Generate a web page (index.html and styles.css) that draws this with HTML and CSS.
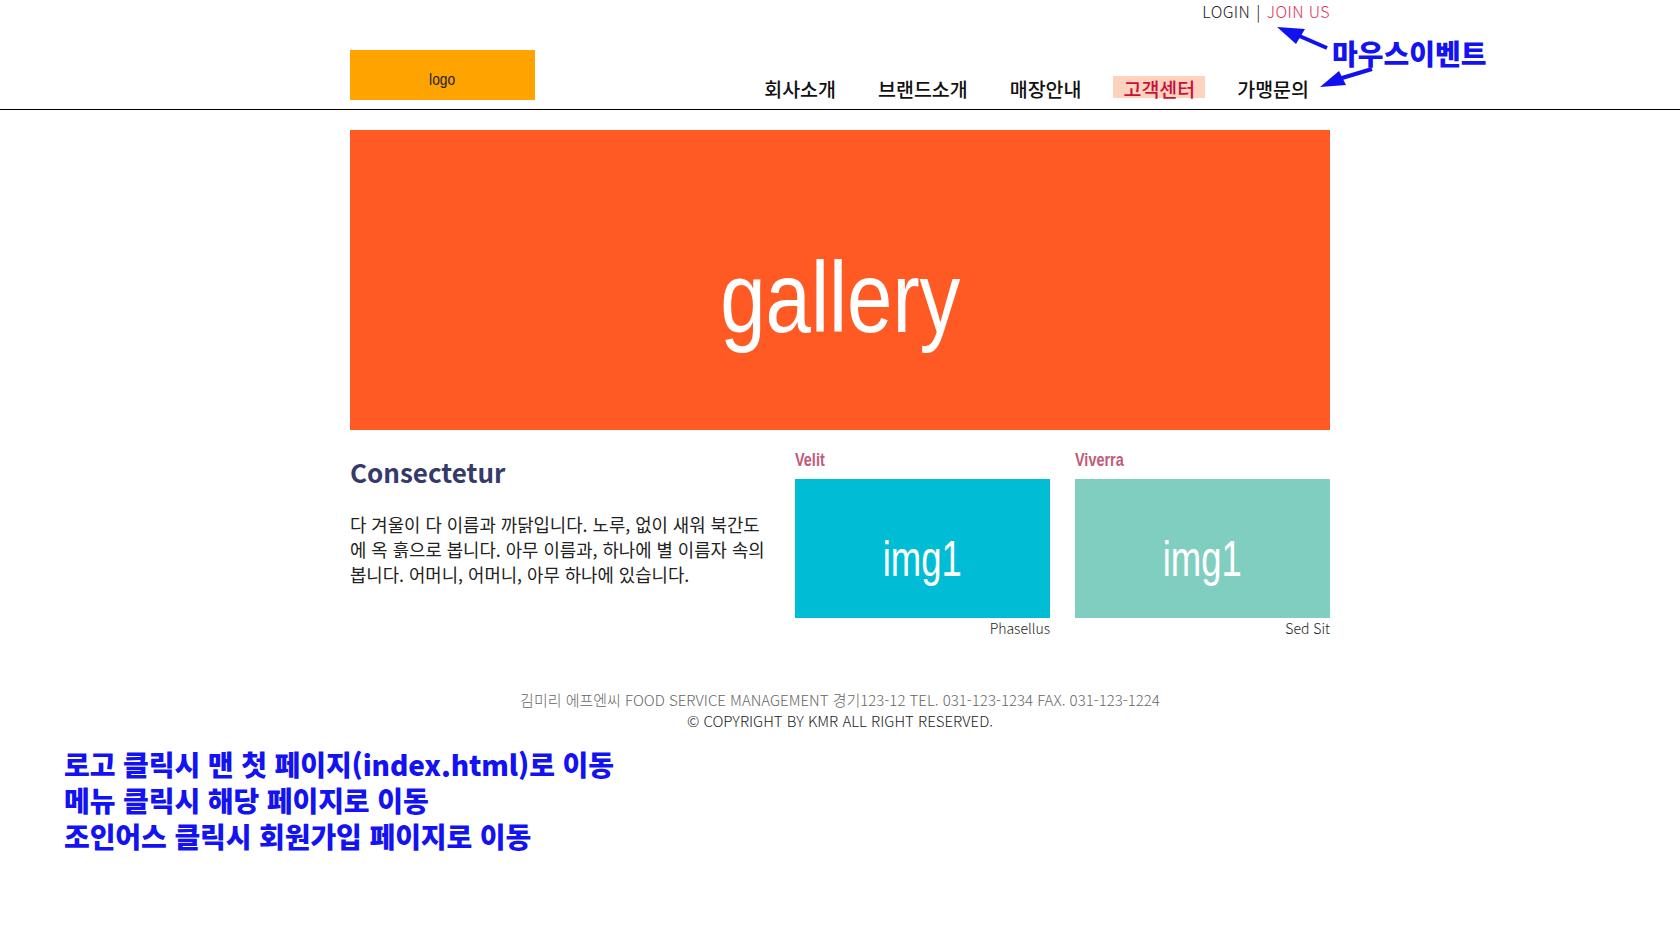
FILE: index.html
```html
<!DOCTYPE html>
<html lang="ko">
<head>
<meta charset="utf-8">
<title>gallery</title>
<link rel="stylesheet" href="styles.css">
</head>
<body>
<div class="util">
  <div class="container util-inner">
    <a class="util-login" href="#">LOGIN</a>
    <span class="util-sep">|</span>
    <a class="util-join" href="#">JOIN US</a>
  </div>
</div>
<header class="header">
  <div class="container header-inner">
    <a class="logo" href="index.html"><span class="narrow logo-text">logo</span></a>
    <nav class="gnb">
      <a class="gnb-item" href="#">회사소개</a>
      <a class="gnb-item" href="#">브랜드소개</a>
      <a class="gnb-item" href="#">매장안내</a>
      <a class="gnb-item gnb-item-on" href="#">고객센터</a>
      <a class="gnb-item" href="#">가맹문의</a>
    </nav>
  </div>
</header>
<main class="container">
  <section class="gallery"><span class="narrow gallery-text">gallery</span></section>
  <section class="content">
    <div class="intro">
      <h2 class="intro-title">Consectetur</h2>
      <p class="intro-text">다 겨울이 다 이름과 까닭입니다. 노루, 없이 새워 북간도에 옥 흙으로 봅니다. 아무 이름과, 하나에 별 이름자 속의 봅니다. 어머니, 어머니, 아무 하나에 있습니다.</p>
    </div>
    <figure class="card">
      <h3 class="card-title"><span class="narrow card-title-text">Velit</span></h3>
      <div class="card-img card-img-blue"><span class="narrow card-img-text">img1</span></div>
      <figcaption class="card-cap">Phasellus</figcaption>
    </figure>
    <figure class="card">
      <h3 class="card-title"><span class="narrow card-title-text">Viverra</span></h3>
      <div class="card-img card-img-mint"><span class="narrow card-img-text">img1</span></div>
      <figcaption class="card-cap">Sed Sit</figcaption>
    </figure>
  </section>
</main>
<footer class="footer">
  <p class="footer-addr">김미리 에프엔씨 FOOD SERVICE MANAGEMENT 경기123-12 TEL. 031-123-1234 FAX. 031-123-1224</p>
  <p class="footer-copy">© COPYRIGHT BY KMR ALL RIGHT RESERVED.</p>
</footer>
<div class="notes">
  <p>로고 클릭시 맨 첫 페이지(index.html)로 이동</p>
  <p>메뉴 클릭시 해당 페이지로 이동</p>
  <p>조인어스 클릭시 회원가입 페이지로 이동</p>
</div>
<div class="memo">
  <svg class="memo-arrows" width="120" height="70" viewBox="0 0 120 70">
    <line x1="53" y1="22" x2="14" y2="5" stroke="#1010f0" stroke-width="4"/>
    <polygon points="3,1 31,3 22,18" fill="#1010f0"/>
    <line x1="98" y1="43" x2="58" y2="55" stroke="#1010f0" stroke-width="4"/>
    <polygon points="46,61 65,45 72,59" fill="#1010f0"/>
  </svg>
  <span class="memo-text">마우스이벤트</span>
</div>
</body>
</html>
```
FILE: styles.css
```css
* { box-sizing: border-box; }
html, body { margin: 0; padding: 0; }
body {
  font-family: "Noto Sans", "Noto Sans CJK KR", sans-serif;
  color: #222;
  background: #fff;
  position: relative;
}
a { text-decoration: none; color: inherit; }
p, h2, h3, figure { margin: 0; }

.container { width: 980px; margin: 0 auto; }

/* condensed sans (Arial Narrow look) */
.narrow {
  display: inline-block;
  font-family: "Liberation Sans", Arial, sans-serif;
  transform-origin: center center;
}

/* util */
.util { height: 22px; }
.util-inner {
  display: flex;
  justify-content: flex-end;
  align-items: center;
  height: 22px;
  font-family: "Noto Sans CJK KR", sans-serif;
  font-weight: 300;
  font-size: 16px;
  letter-spacing: 0.4px;
}
.util-login { color: #222; }
.util-sep { color: #000; margin: 0 6px; }
.util-join { color: #e0305a; }

/* header */
.header { border-bottom: 1px solid #000; }
.header-inner {
  display: flex;
  justify-content: space-between;
  align-items: flex-end;
  height: 87px;
}
.logo {
  align-self: flex-start;
  margin-top: 28px;
  width: 185px;
  height: 50px;
  padding-top: 8px;
  background: #ffa300;
  color: #223;
  text-align: center;
  font-size: 16px;
  line-height: 42px;
}
.logo-text { transform: scaleX(0.86); }
.gnb {
  display: flex;
  gap: 22px;
  padding-right: 11px;
  padding-bottom: 11px;
}
.gnb-item {
  display: block;
  padding: 2px 10px 0;
  height: 22px;
  line-height: 22px;
  font-family: "Noto Sans CJK KR", sans-serif;
  font-weight: 500;
  font-size: 19.5px;
  color: #111;
}
.gnb-item-on { background: #fdd3bf; color: #c8103c; }

/* gallery */
.gallery {
  margin-top: 20px;
  height: 300px;
  padding-top: 28px;
  background: #ff5a23;
  color: #fff;
  text-align: center;
  font-size: 100px;
  line-height: 270px;
}
.gallery-text { transform: scaleX(0.815); }

/* content */
.content {
  display: flex;
  gap: 25px;
  padding-top: 20px;
}
.intro { width: 420px; padding-top: 6px; }
.intro-title {
  font-family: "Noto Sans CJK KR", sans-serif;
  font-weight: 700;
  font-size: 26px;
  line-height: 31px;
  color: #353a6a;
}
.intro-text {
  margin-top: 25px;
  font-family: "Noto Sans CJK KR", sans-serif;
  font-size: 17.8px;
  line-height: 25px;
  color: #222;
}
.card { width: 255px; }
.card-title {
  font-weight: 700;
  font-size: 19px;
  line-height: 18px;
  height: 29px;
  color: #c25a78;
}
.card-title-text {
  transform: scaleX(0.76);
  transform-origin: left center;
}
.card-img {
  height: 139px;
  color: #fff;
  text-align: center;
  font-size: 50px;
  line-height: 156px;
}
.card-img-text { transform: scaleX(0.73); }
.card-img-blue { background: #00bcd4; }
.card-img-mint { background: #80cec0; }
.card-cap {
  text-align: right;
  font-family: "Noto Sans CJK KR", sans-serif;
  font-weight: 300;
  font-size: 14px;
  line-height: 20px;
  color: #222;
}

/* footer */
.footer {
  margin-top: 51px;
  text-align: center;
  font-family: "Noto Sans CJK KR", sans-serif;
  font-weight: 300;
  font-size: 15px;
  line-height: 21px;
}
.footer-addr { color: #666; }
.footer-copy { color: #222; }

/* notes */
.notes {
  margin-top: 15px;
  padding-left: 64px;
  font-family: "Noto Sans CJK KR", sans-serif;
  font-weight: 900;
  font-size: 28px;
  line-height: 36px;
  letter-spacing: -0.1px;
  color: #1212f2;
}

/* memo annotation overlay */
.memo {
  position: absolute;
  left: 1274px;
  top: 26px;
  width: 240px;
  height: 70px;
}
.memo-arrows { position: absolute; left: 0; top: 0; }
.memo-text {
  position: absolute;
  left: 58px;
  top: 10px;
  font-family: "Noto Sans CJK KR", sans-serif;
  font-weight: 900;
  font-size: 28px;
  line-height: 34px;
  color: #1212f2;
  white-space: nowrap;
}
```
